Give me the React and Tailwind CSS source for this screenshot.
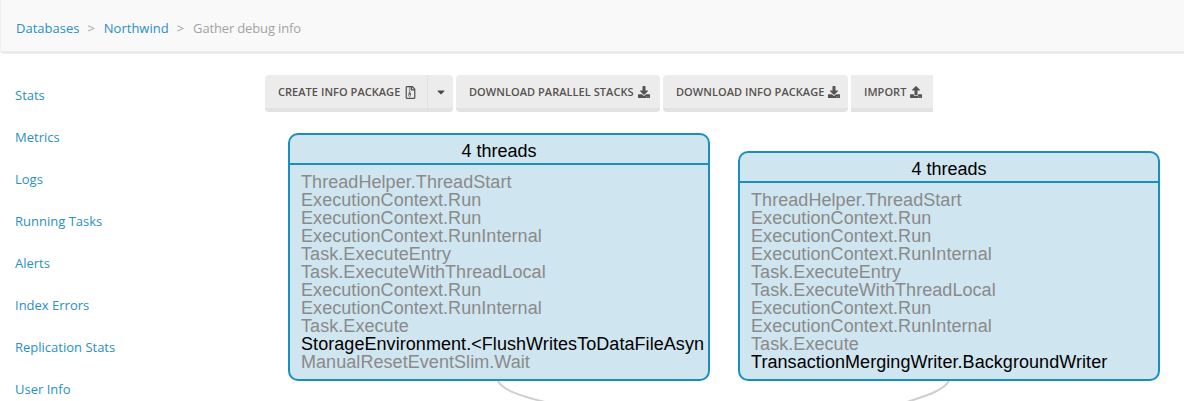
import { FaDownload, FaUpload, FaRegFileArchive, FaCaretDown } from "react-icons/fa";

const menu = ["Stats", "Metrics", "Logs", "Running Tasks", "Alerts", "Index Errors", "Replication Stats", "User Info"];

const baseFrames = [
  "ThreadHelper.ThreadStart",
  "ExecutionContext.Run",
  "ExecutionContext.Run",
  "ExecutionContext.RunInternal",
  "Task.ExecuteEntry",
  "Task.ExecuteWithThreadLocal",
  "ExecutionContext.Run",
  "ExecutionContext.RunInternal",
  "Task.Execute",
];

const Btn = ({ children, className = "" }) => (
  <button className={`h-[37px] pt-[1px] flex items-center gap-[4px] bg-[#ececec] border-b-[4px] border-[#e2e2e2] text-[#55524f] text-[11px] font-semibold tracking-[0.05px] whitespace-nowrap ${className}`}>
    {children}
  </button>
);

const ThreadNode = ({ className, active, last }) => (
  <div className={`absolute w-[422px] rounded-[10px] border-2 border-[#1a8fbf] bg-[#cfe5ef] overflow-hidden font-['Liberation_Sans',sans-serif] ${className}`}>
    <div className="h-[30px] pt-[5px] border-b-2 border-[#1a8fbf] flex items-center justify-center text-black text-[18px]">
      4 threads
    </div>
    <div className="pt-[8px] pl-[11px] text-[18px] leading-[18px] tracking-[0.06px] whitespace-nowrap text-[#8a8a8a]">
      {baseFrames.map((f, i) => (
        <div key={i}>{f}</div>
      ))}
      <div className="text-black">{active}</div>
      {last && <div>{last}</div>}
    </div>
  </div>
);

export default function App() {
  return (
    <div className="h-[401px] w-[1184px] overflow-hidden bg-white font-['Open_Sans',sans-serif]">
      <div className="h-[54px] bg-[#f9f9f9] border-l border-[#efefef] border-b-[3px] border-b-[#ececec] rounded-bl-[4px] flex items-center pl-[15px] pt-[6px] gap-[8px] text-[13px] text-[#a3a3a3]">
        <a className="text-[#2b8fc2]">Databases</a>
        <span>&gt;</span>
        <a className="text-[#2b8fc2] ml-[1px]">Northwind</a>
        <span>&gt;</span>
        <span className="ml-[1px] tracking-[-0.15px]">Gather debug info</span>
      </div>

      <div className="flex">
        <div className="w-[265px] shrink-0 pl-[15px] pt-[31px] flex flex-col gap-[21px] text-[13px] leading-[21px] text-[#2b8fc2]">
          {menu.map((m) => (
            <a key={m}>{m}</a>
          ))}
        </div>

        <div className="relative flex-1 h-[347px]">
          <div className="flex pt-[21px] gap-[3px]">
            <div className="flex">
              <Btn className="w-[162px] pl-[13px] rounded-l-[4px]">
                CREATE INFO PACKAGE <FaRegFileArchive className="text-[13px] shrink-0" />
              </Btn>
              <Btn className="w-[26px] justify-center rounded-r-[4px] border-l border-l-[#e2e2e2]">
                <FaCaretDown className="text-[12px] text-[#4a4a4a] shrink-0" />
              </Btn>
            </div>
            <Btn className="w-[204px] pl-[13px] rounded-[4px]">
              DOWNLOAD PARALLEL STACKS <FaDownload className="text-[12px] shrink-0" />
            </Btn>
            <Btn className="w-[185px] pl-[13px] rounded-[4px]">
              DOWNLOAD INFO PACKAGE <FaDownload className="text-[12px] shrink-0" />
            </Btn>
            <Btn className="w-[82px] pl-[13px]">
              IMPORT <FaUpload className="text-[12px] shrink-0" />
            </Btn>
          </div>

          <svg className="absolute left-[200px] top-[321px]" width="500" height="30" fill="none" stroke="#cfcfcf" strokeWidth="2">
            <path d="M33 6 C38 16 60 22 80 27" />
            <path d="M484 6 C478 16 460 21 442 27" />
          </svg>

          <ThreadNode
            className="left-[23px] top-[79px] h-[248px]"
            active="StorageEnvironment.<FlushWritesToDataFileAsyn"
            last="ManualResetEventSlim.Wait"
          />
          <ThreadNode
            className="left-[473px] top-[97px] h-[230px]"
            active="TransactionMergingWriter.BackgroundWriter"
          />
        </div>
      </div>
    </div>
  );
}
